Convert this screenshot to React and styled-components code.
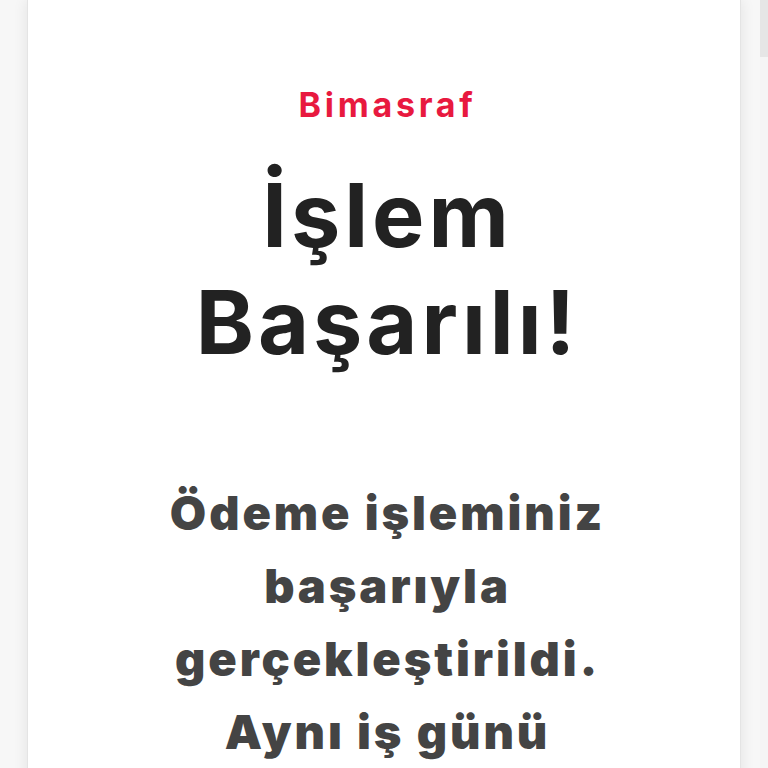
import React from "react";
import styled, { createGlobalStyle } from "styled-components";

const GlobalStyle = createGlobalStyle`
	html, body {
		margin: 0;
		padding: 0;
		background: #f7f7f7;
		overflow: hidden;
	}
	body {
		font-family: Inter, "Noto Sans", "Liberation Sans", sans-serif;
	}
`;

const Page = styled.div`
	min-height: 768px;
	padding: 0 27px;
	display: flex;
	justify-content: center;
`;

const Card = styled.main`
	flex: 1;
	min-height: 768px;
	background: #fff;
	border-left: 1px solid #e4e4e4;
	border-right: 1px solid #e4e4e4;
	box-shadow: 0 0 14px rgba(0, 0, 0, 0.09);
	padding: 85px 0 0 7px;
	display: flex;
	flex-direction: column;
	align-items: center;
	text-align: center;
`;

const Brand = styled.div`
	font-size: 34px;
	line-height: 40px;
	font-weight: 700;
	letter-spacing: 3.7px;
	color: #e8193f;
`;

const Title = styled.h1`
	margin: 37px 0 0;
	font-size: 88px;
	line-height: 107px;
	font-weight: 700;
	letter-spacing: 4px;
	color: #222;
`;

const Message = styled.p`
	margin: 100px 0 0;
	font-size: 47px;
	line-height: 73px;
	font-weight: 900;
	letter-spacing: 2.9px;
	color: #444;
`;

const Line = styled.span`
	display: block;
	white-space: nowrap;
`;

const ScrollTrack = styled.div`
	position: fixed;
	top: 0;
	right: 0;
	width: 8px;
	height: 100vh;
	background: #f5f5f5;
`;

const ScrollThumb = styled.div`
	width: 8px;
	height: 57px;
	background: #e6e6e6;
`;

const lines = ["Ödeme işleminiz", "başarıyla", "gerçekleştirildi.", "Aynı iş günü"];

export default function App() {
	return (
		<>
			<GlobalStyle />
			<Page>
				<Card>
					<Brand>Bimasraf</Brand>
					<Title>
						<Line>İşlem</Line>
						<Line>Başarılı!</Line>
					</Title>
					<Message>
						{lines.map(l => (
							<Line key={l}>{l}</Line>
						))}
					</Message>
				</Card>
			</Page>
			<ScrollTrack>
				<ScrollThumb />
			</ScrollTrack>
		</>
	);
}
